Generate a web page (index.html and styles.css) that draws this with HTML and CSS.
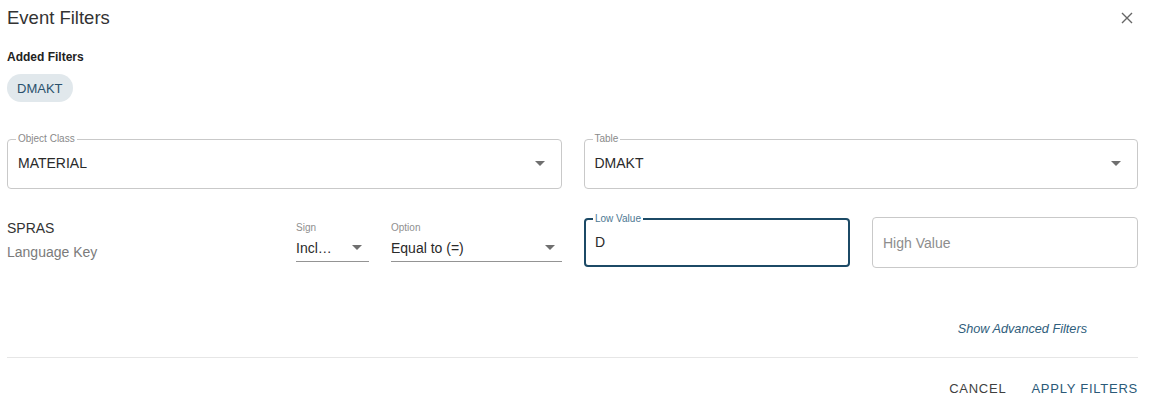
FILE: index.html
```html
<!DOCTYPE html>
<html>
<head>
<meta charset="utf-8">
<link rel="stylesheet" href="styles.css">
</head>
<body>
<div class="dialog">
  <div class="header">
    <h1 class="title">Event Filters</h1>
    <button class="close" aria-label="close">
      <svg width="12" height="12" viewBox="0 0 12 12"><path d="M1 1L11 11M11 1L1 11" stroke="#666" stroke-width="1.4" fill="none"/></svg>
    </button>
  </div>
  <div class="added-title">Added Filters</div>
  <div class="chips"><span class="chip">DMAKT</span></div>

  <div class="grid2">
    <fieldset class="outlined">
      <legend>Object Class</legend>
      <div class="value-row"><span class="value">MATERIAL</span><span class="caret"></span></div>
    </fieldset>
    <fieldset class="outlined">
      <legend>Table</legend>
      <div class="value-row"><span class="value">DMAKT</span><span class="caret"></span></div>
    </fieldset>
  </div>

  <div class="filter-row">
    <div class="field-name">
      <div class="fname">SPRAS</div>
      <div class="fdesc">Language Key</div>
    </div>
    <div class="std">
      <div class="std-label">Sign</div>
      <div class="std-input"><span class="value">Incl…</span><span class="caret"></span></div>
    </div>
    <div class="std">
      <div class="std-label">Option</div>
      <div class="std-input"><span class="value">Equal to (=)</span><span class="caret"></span></div>
    </div>
    <fieldset class="outlined focused">
      <legend>Low Value</legend>
      <div class="value-row"><span class="value">D</span></div>
    </fieldset>
    <fieldset class="outlined plain">
      <div class="value-row"><span class="placeholder">High Value</span></div>
    </fieldset>
  </div>

  <div class="advanced"><a class="adv-link">Show Advanced Filters</a></div>
  <div class="divider"></div>
  <div class="actions">
    <button class="btn cancel">CANCEL</button>
    <button class="btn apply">APPLY FILTERS</button>
  </div>
</div>
</body>
</html>
```
FILE: styles.css
```css
* { box-sizing: border-box; }
body {
  margin: 0;
  background: #fff;
  font-family: "Liberation Sans", Arial, sans-serif;
  color: #333;
}
.dialog {
  width: 1161px;
  height: 408px;
  padding: 0 23px 0 7px;
}
.header {
  display: flex;
  align-items: center;
  justify-content: space-between;
  height: 36px;
}
.title {
  margin: 0;
  font-size: 18.5px;
  font-weight: 400;
  color: #333;
}
.close {
  border: 0;
  background: none;
  padding: 0;
  margin-right: 5px;
  width: 12px;
  height: 12px;
  display: flex;
}
.added-title {
  margin-top: 14px;
  font-size: 12px;
  font-weight: 700;
  color: #222;
  line-height: 14px;
}
.chips {
  margin-top: 10px;
  display: flex;
}
.chip {
  display: inline-flex;
  align-items: center;
  height: 28px;
  padding: 0 10px;
  border-radius: 14px;
  background: #e1e8ec;
  color: #2b516c;
  font-size: 13px;
}
.grid2 {
  margin-top: 32px;
  display: grid;
  grid-template-columns: 1fr 1fr;
  column-gap: 22px;
}
fieldset.outlined {
  margin: 0;
  border: 1px solid #c9c9c9;
  border-radius: 4px;
  padding: 0 9px 0 10px;
  height: 55px;
  min-width: 0;
}
fieldset.outlined legend {
  font-size: 10px;
  line-height: 10px;
  color: #8a8a8a;
  padding: 0 2px;
  margin-left: -2px;
}
.value-row {
  display: flex;
  align-items: center;
  justify-content: space-between;
  height: 38px;
  padding-right: 7px;
}
.value {
  font-size: 14px;
  color: #2a2a2a;
}
.placeholder {
  font-size: 14px;
  color: #8d8d8d;
}
.caret {
  width: 0;
  height: 0;
  border-left: 5px solid transparent;
  border-right: 5px solid transparent;
  border-top: 5px solid #6f6f6f;
}
.filter-row {
  margin-top: 24px;
  display: grid;
  grid-template-columns: 267px 73px 171px 1fr 1fr;
  column-gap: 22px;
  align-items: start;
}
.field-name { padding-top: 7px; }
.fname { font-size: 14px; color: #333; line-height: 16px; }
.fdesc { font-size: 14px; color: #7b7b7b; line-height: 16px; margin-top: 8px; }
.std { padding-top: 9px; }
.std-label { font-size: 10px; color: #8f8f8f; line-height: 12px; }
.std-input {
  display: flex;
  align-items: center;
  justify-content: space-between;
  height: 28px;
  border-bottom: 1px solid #949494;
  padding-right: 7px;
}
fieldset.focused {
  border: 2px solid #1c4a66;
  padding: 0 8px 0 9px;
  margin-top: 1px;
  height: 53px;
}
fieldset.focused legend { color: #4e7892; }
fieldset.focused .value-row { height: 36px; }
fieldset.plain { height: 51px; margin-top: 4px; }
fieldset.plain .value-row { height: 49px; }
.advanced {
  margin-top: 54px;
  display: flex;
  justify-content: flex-end;
  padding-right: 51px;
}
.adv-link {
  font-size: 12.7px;
  font-style: italic;
  color: #2f5e7c;
}
.divider {
  margin-top: 21px;
  height: 1px;
  background: #e6e6e6;
}
.actions {
  margin-top: 23px;
  display: flex;
  justify-content: flex-end;
  gap: 25px;
}
.btn {
  border: 0;
  background: none;
  padding: 0;
  font-family: "Liberation Sans", Arial, sans-serif;
  font-size: 13px;
  letter-spacing: 0.75px;
  line-height: 16px;
}
.cancel { color: #3f3f3f; }
.apply { color: #2b5a78; }
```
